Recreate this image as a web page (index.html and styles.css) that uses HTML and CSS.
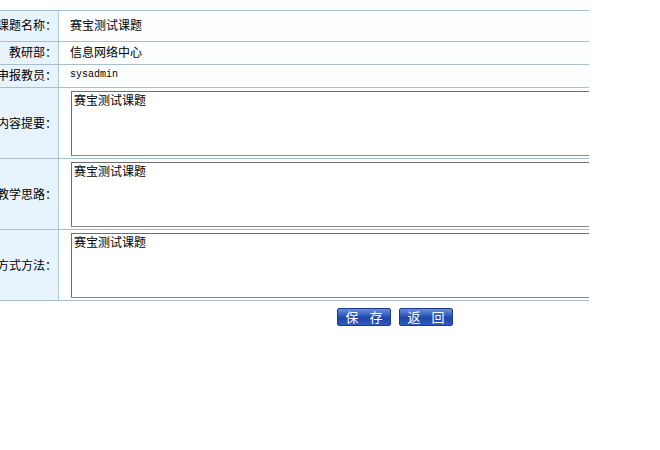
FILE: index.html
```html
<!DOCTYPE html>
<html>
<head>
<meta charset="utf-8">
<link rel="stylesheet" href="styles.css">
</head>
<body>
<div class="frame">
  <table class="form">
    <tr class="r1">
      <td class="lbl">课题名称：</td>
      <td class="val">赛宝测试课题</td>
    </tr>
    <tr class="r2">
      <td class="lbl">教研部：</td>
      <td class="val">信息网络中心</td>
    </tr>
    <tr class="r2">
      <td class="lbl">申报教员：</td>
      <td class="val mono">sysadmin</td>
    </tr>
    <tr>
      <td class="lbl">内容提要：</td>
      <td class="val ta"><textarea>赛宝测试课题</textarea></td>
    </tr>
    <tr>
      <td class="lbl">教学思路：</td>
      <td class="val ta"><textarea>赛宝测试课题</textarea></td>
    </tr>
    <tr>
      <td class="lbl">方式方法：</td>
      <td class="val ta"><textarea>赛宝测试课题</textarea></td>
    </tr>
  </table>
</div>
<div class="actions">
  <button class="btn">保 存</button>
  <button class="btn">返 回</button>
</div>
</body>
</html>
```

FILE: styles.css
```css
html, body {
  margin: 0;
  padding: 0;
  background: #ffffff;
}
body {
  font-family: "Noto Sans CJK SC", "DejaVu Sans", sans-serif;
  font-size: 12px;
  color: #000;
}
.frame {
  width: 589px;
  overflow: hidden;
  padding-top: 10px;
}
.form {
  border-collapse: collapse;
  margin-left: -42px;
  width: 800px;
}
.form td {
  border-top: 1px solid #a9bfcc;
  border-bottom: 1px solid #a9bfcc;
  padding: 0;
}
.lbl {
  width: 99px;
  background: #e8f4fd;
  text-align: right;
  padding-right: 1px !important;
  border-right: 1px solid #b3c8d6;
  white-space: nowrap;
  line-height: 14px;
}
.val {
  padding-left: 11px !important;
  line-height: 14px;
  background: #fdfeff;
}
.r1 td {
  height: 28px;
  padding-bottom: 2px !important;
}
.r2 td {
  height: 20px;
  padding-bottom: 2px !important;
}
.mono {
  font-family: "Liberation Mono", "DejaVu Sans Mono", monospace;
  font-size: 10px;
}
.ta {
  height: 70px;
  vertical-align: middle;
}
textarea {
  display: block;
  width: 600px;
  height: 65px;
  box-sizing: border-box;
  margin: 0 0 0 1px;
  padding: 1px 2px;
  border: 1px solid #8a8a8a;
  border-top-color: #6f6f6f;
  border-left-color: #6f6f6f;
  font-family: "Noto Sans CJK SC", sans-serif;
  font-size: 12px;
  line-height: 14px;
  resize: none;
  background: #fff;
  color: #000;
}
.actions {
  display: flex;
  gap: 8px;
  padding-left: 337px;
  padding-top: 7px;
}
.btn {
  width: 54px;
  height: 18px;
  padding: 0;
  border: 1px solid #1b3a8a;
  border-radius: 2px;
  background: linear-gradient(#6b8fdc, #2c55b8 45%, #1c45a6 55%, #2f5cc0);
  color: #fff;
  font-family: "Noto Sans CJK SC", sans-serif;
  font-size: 13px;
  line-height: 16px;
  letter-spacing: 4px;
  text-indent: 4px;
}
```
